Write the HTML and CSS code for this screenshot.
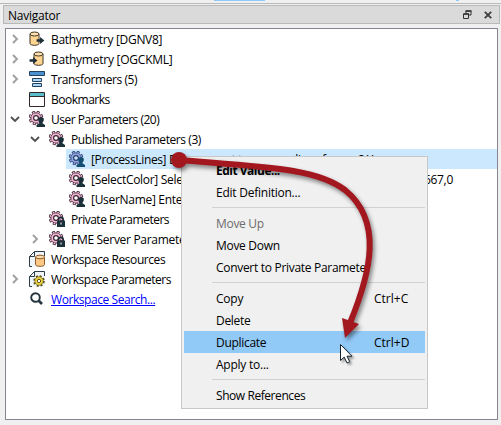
FILE: index.html
```html
<!DOCTYPE html>
<html lang="en">
<head>
<meta charset="utf-8">
<title>Navigator</title>
<link rel="stylesheet" href="styles.css">
</head>
<body>
<svg class="defs" aria-hidden="true">
  <defs>
    <symbol id="closed" viewBox="0 0 10 10"><path d="M3 1l4 4-4 4" fill="none" stroke="#a0a0a0" stroke-width="1.9"/></symbol>
    <symbol id="open" viewBox="0 0 10 10"><path d="M1 3l4 4 4-4" fill="none" stroke="#505050" stroke-width="1.9"/></symbol>
    <symbol id="db" viewBox="0 0 16 16"><path d="M1 3v9.500c0 2.400 9 2.400 9 0V3" fill="#ffd591" stroke="#3d3426"/><ellipse cx="5.500" cy="3" rx="4.500" ry="2" fill="#ffe0ad" stroke="#3d3426"/></symbol>
    <symbol id="arrow" viewBox="0 0 9 8"><path d="M0 2.500h4V0l5 4-5 4V5.500H0z" fill="#1f2f38"/></symbol>
    <symbol id="gear" viewBox="0 0 16 16">
      <circle class="teeth" cx="7" cy="7" r="6" stroke-width="2.600" stroke-dasharray="2.900 1.812"/>
      <circle class="wheel" cx="7" cy="7" r="5.200" stroke-width=".9"/>
      <circle class="tips" cx="7" cy="7" r="5.700" stroke-width="1.700" stroke-dasharray="1.500 2.977" stroke-dashoffset="-.7"/>
      <circle class="hub" cx="7" cy="7" r="2.400" stroke-width="1.200"/>
    </symbol>
    <symbol id="user" viewBox="0 0 16 16"><use href="#gear"/><g class="badge"><circle cx="12" cy="8.800" r="2.800"/><path d="M7.500 16v-2l3-1.700v-2h3v2L16 14v2z"/></g></symbol>
    <symbol id="lock" viewBox="0 0 16 16"><use href="#gear"/><path d="M8 9.500h8V16H8z" fill="#1c303a"/><path d="M9.700 10V8.500c0-3 4.600-3 4.600 0V10" fill="none" stroke="#1c303a" stroke-width="1.400"/><path d="M12 11.500v2" stroke="#fff"/></symbol>
    <symbol id="sheet" viewBox="0 0 16 16"><path d="M5.500.5h10v15H.5v-10z" fill="#eef4f7"/><path d="M3 15.500H.5v-10l5-5h10V5M5.500.5v5h-5" fill="none" stroke="#2d3d47"/></symbol>
  </defs>
</svg>
<div class="toolbar"><span class="tab"></span><span class="tab small"></span></div>
<header class="title"><span>Navigator</span>
  <svg class="float" viewBox="0 0 9 9"><path d="M3 3V1h5v4H6M.5 4h5v4.500h-5z" fill="none" stroke="#333"/><path d="M2.500 1h6M.5 4h5.500" stroke="#333" stroke-width="1.600"/></svg>
  <svg class="close" viewBox="0 0 8 8"><path d="M.8.8l6.400 6.400M7.200.8L.8 7.200" stroke="#404040" stroke-width="1.900"/></svg>
</header>
<main class="tree">
  <div class="row"><svg class="chev"><use href="#closed"/></svg><svg class="icon" viewBox="0 0 16 16"><use href="#db" width="16" height="16"/><use href="#arrow" x="7" y="6" width="9" height="7"/></svg><span class="label">Bathymetry [DGNV8]</span></div>
  <div class="row"><svg class="chev"><use href="#closed"/></svg><svg class="icon" viewBox="0 0 16 16"><use href="#db" x="4" width="16" height="16"/><use href="#arrow" x="0" y="6" width="9" height="7"/></svg><span class="label wide">Bathymetry [OGCKML]</span></div>
  <div class="row"><svg class="chev"><use href="#closed"/></svg><svg class="icon" viewBox="0 0 16 16"><path d="M.5.5h15v4H.5z" fill="#4b91cf" stroke="#24425c"/><path d="M3.500 7.500h9v3h-9zM3.500 12.500h9v3h-9z" fill="#a9d2f7" stroke="#24425c"/></svg><span class="label tight">Transformers (5)</span></div>
  <div class="row"><i class="chev"></i><svg class="icon" viewBox="0 0 16 16"><path d="M.5 1.500h15v14H.5z" fill="#fff" stroke="#302828"/><path d="M1 2h14v3H1z" fill="#5bbdcb"/><path d="M0 5.500h16" stroke="#302828"/></svg><span class="label tighter">Bookmarks</span></div>
  <div class="row"><svg class="chev"><use href="#open"/></svg><svg class="icon"><use href="#user"/></svg><span class="label tighter">User Parameters (20)</span></div>
  <div class="row l1"><svg class="chev"><use href="#open"/></svg><svg class="icon"><use href="#user"/></svg><span class="label tight">Published Parameters (3)</span></div>
  <div class="row l2 selected"><svg class="icon"><use href="#user"/></svg><span class="label process">[ProcessLines] Do you want to process lines from ...? Yes</span></div>
  <div class="row l2"><svg class="icon"><use href="#user"/></svg><span class="label">[SelectColor] Select Color</span><span class="label value">667,0</span></div>
  <div class="row l2"><svg class="icon"><use href="#user"/></svg><span class="label">[UserName] Enter Name</span></div>
  <div class="row l1"><i class="chev"></i><svg class="icon"><use href="#lock"/></svg><span class="label tighter">Private Parameters</span></div>
  <div class="row l1"><svg class="chev"><use href="#closed"/></svg><svg class="icon"><use href="#lock"/></svg><span class="label">FME Server Parameters</span></div>
  <div class="row"><i class="chev"></i><svg class="icon" viewBox="0 0 16 16"><use href="#sheet"/><path d="M6.500 6v7.500c0 2.500 9 2.500 9 0V6" fill="#ffc985" stroke="#8a5b2e"/><ellipse cx="11" cy="6" rx="4.500" ry="1.800" fill="#ffdcae" stroke="#8a5b2e"/></svg><span class="label tight">Workspace Resources</span></div>
  <div class="row"><svg class="chev"><use href="#closed"/></svg><svg class="icon" viewBox="0 0 16 16"><use href="#sheet"/><circle cx="10" cy="10" r="4.600" fill="none" stroke="#5b5218" stroke-width="2.400" stroke-dasharray="2 1.613"/><circle cx="10" cy="10" r="4.200" fill="#f2d743" stroke="#5b5218" stroke-width=".6"/><circle cx="10" cy="10" r="1.700" fill="#fff" stroke="#5b5218"/></svg><span class="label tighter">Workspace Parameters</span></div>
  <div class="row"><i class="chev"></i><svg class="icon" viewBox="0 0 16 16"><circle cx="6.500" cy="6.500" r="4.300" fill="#fff" stroke="#26343c" stroke-width="1.900"/><path d="M9.500 9.500l3.500 3.500" stroke="#26343c" stroke-width="2.600"/></svg><span class="label tight link">Workspace Search...</span></div>
</main>
<nav class="menu">
  <div class="item"><b class="label">Edit Value...</b></div>
  <div class="item"><span class="label wide">Edit Definition...</span></div>
  <hr>
  <div class="item off"><span class="label">Move Up</span></div>
  <div class="item"><span class="label">Move Down</span></div>
  <div class="item"><span class="label">Convert to Private Parameter</span></div>
  <hr>
  <div class="item"><span class="label wide">Copy</span><kbd class="label">Ctrl+C</kbd></div>
  <div class="item"><span class="label">Delete</span></div>
  <div class="item active"><span class="label">Duplicate</span><kbd class="label">Ctrl+D</kbd></div>
  <div class="item"><span class="label wide">Apply to...</span></div>
  <hr>
  <div class="item"><span class="label tight">Show References</span></div>
</nav>
<svg class="overlay" viewBox="0 0 501 425">
  <g class="annotation">
    <circle cx="179" cy="160" r="8" fill="#a3171f"/>
    <path d="M179 160C265 167 316 168 345 190C383 221 371 272 350 323" fill="none" stroke="#a3171f" stroke-width="6"/>
    <path d="M342 318l17 6-14 14z" fill="#a3171f"/>
  </g>
  <path class="pointer" d="M340.500 344.500v16l3.700-3.400 2.800 5.900 2.700-1.300-2.700-5.500h5z" fill="#fff" stroke="#14202c"/>
</svg>
</body>
</html>
```
FILE: styles.css
```css
* { box-sizing: border-box; }
body {
  margin: 0;
  width: 501px;
  height: 425px;
  overflow: hidden;
  background: #f0f0f0;
  color: #000;
  font: 12px/20px "Open Sans", "Noto Sans", sans-serif;
  letter-spacing: -.3px;
  white-space: nowrap;
}
.defs { position: absolute; width: 0; height: 0; }
.toolbar { display: flex; height: 4px; border-bottom: 1px solid #b9b9b9; padding-left: 214px; }
.tab { width: 51px; height: 1px; background: #90c8f6; }
.tab.small { width: 3px; margin-left: 191px; }
.title {
  display: flex;
  align-items: center;
  height: 19px;
  margin: 1px 1px 0 3px;
  padding: 0 7px 0 4px;
  border: 1px solid #b9b9b9;
  background: #dadada;
}
.title span { flex: 1; padding-top: 2px; letter-spacing: -.25px; }
.float { width: 9px; height: 9px; margin-right: 12px; }
.close { width: 8px; height: 8px; }
.tree {
  width: 493px;
  height: 392px;
  margin: 4px 0 0 5px;
  border: 1px solid #828790;
  background: #fff;
}
.row { display: flex; align-items: center; height: 20px; padding-left: 4px; }
.label { padding-top: 2px; }
.wide { letter-spacing: -.24px; }
.tight { letter-spacing: -.43px; }
.tighter { letter-spacing: -.49px; }
.process { letter-spacing: -.36px; }
.chev { flex: none; width: 10px; height: 10px; margin-right: 9px; }
.icon { flex: none; width: 16px; height: 16px; margin-right: 6px; }
.l1 { padding-left: 24px; }
.l2 { margin-left: 60px; padding-left: 3px; }
.tree {
  --gear: #efb4d2;
  --line: #3b2430;
  --hub: #fff;
  --badge: #1c303a;
}
.selected {
  --gear: #91a5df;
  --line: #273f70;
  --hub: #cce8ff;
  --badge: #144f72;
  background: #cce8ff;
}
.teeth { fill: none; stroke: var(--line); }
.wheel { fill: var(--gear); stroke: var(--line); }
.tips { fill: none; stroke: var(--gear); }
.hub { fill: var(--hub); stroke: var(--line); }
.badge { fill: var(--badge); }
.value { margin-left: auto; margin-right: 44px; }
.link { color: #00f; text-decoration: underline; }
.menu {
  position: absolute;
  left: 181px;
  top: 156px;
  width: 247px;
  height: 253px;
  padding: 2px;
  border: 1px solid #c8c8c8;
  background: #f0f0f0;
}
.item { display: flex; align-items: center; height: 22px; padding-left: 32px; }
.item span, .item b { flex: none; width: 158px; }
.item b { letter-spacing: -.5px; }
.item kbd { font: inherit; letter-spacing: 0; }
.off { color: #6d6d6d; }
.active { background: #91c9f7; }
.menu hr { margin: 4px 0 4px 28px; height: 1px; border: 0; background: #d2d2d2; }
.overlay { position: absolute; left: 0; top: 0; width: 501px; height: 425px; pointer-events: none; }
.annotation { filter: drop-shadow(2px 3px 2px rgba(0, 0, 0, .45)); }
.pointer { filter: drop-shadow(2px 2px 1px rgba(0, 0, 0, .35)); }
```
